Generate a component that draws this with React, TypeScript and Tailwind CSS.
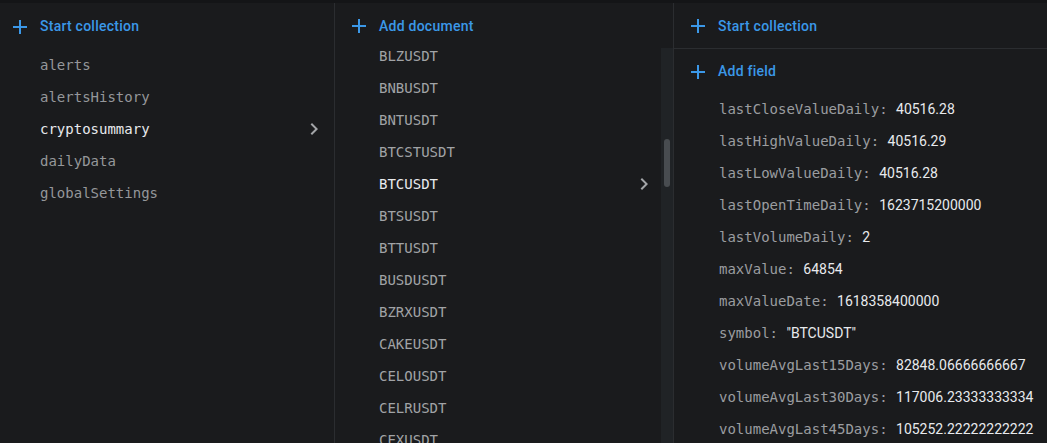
const collections = ["alerts", "alertsHistory", "cryptosummary", "dailyData", "globalSettings"]

const documents = [
  "BLZUSDT",
  "BNBUSDT",
  "BNTUSDT",
  "BTCSTUSDT",
  "BTCUSDT",
  "BTSUSDT",
  "BTTUSDT",
  "BUSDUSDT",
  "BZRXUSDT",
  "CAKEUSDT",
  "CELOUSDT",
  "CELRUSDT",
  "CEXUSDT",
]

const fields: [string, string][] = [
  ["lastCloseValueDaily", "40516.28"],
  ["lastHighValueDaily", "40516.29"],
  ["lastLowValueDaily", "40516.28"],
  ["lastOpenTimeDaily", "1623715200000"],
  ["lastVolumeDaily", "2"],
  ["maxValue", "64854"],
  ["maxValueDate", "1618358400000"],
  ["symbol", '"BTCUSDT"'],
  ["volumeAvgLast15Days", "82848.06666666667"],
  ["volumeAvgLast30Days", "117006.23333333334"],
  ["volumeAvgLast45Days", "105252.22222222222"],
]

const mono = "font-['DejaVu_Sans_Mono','Liberation_Mono',monospace]"
const sans = "font-['Roboto','Noto_Sans',sans-serif]"

const PlusIcon = () => (
  <svg width="24" height="24" viewBox="0 0 24 24" className="shrink-0 fill-[#3b98e8]">
    <path d="M19 13h-6v6h-2v-6H5v-2h6V5h2v6h6v2z" />
  </svg>
)

const Chevron = () => (
  <svg width="24" height="24" viewBox="0 0 24 24" className="shrink-0 fill-[#a3a5a8]">
    <path d="M10 6L8.59 7.41 13.17 12l-4.58 4.59L10 18l6-6z" />
  </svg>
)

const ActionRow = ({ label, className }: { label: string; className?: string }) => (
  <div className={`flex items-center gap-2 ${className ?? ""}`}>
    <PlusIcon />
    <span className={`${sans} text-[14px] font-medium tracking-[0.25px] text-[#3b98e8]`}>{label}</span>
  </div>
)

export default function App() {
  return (
    <div className="flex h-[443px] w-[1047px] flex-col overflow-hidden bg-[#1a1b1d]">
      <div className="h-[3px] shrink-0 bg-[#141517]" />
      <div className="flex min-h-0 flex-1">
        {/* collections */}
        <div className="flex w-[335px] shrink-0 flex-col border-r border-[#2b2d30] pt-px">
          <ActionRow label="Start collection" className="h-[45px] shrink-0 pl-2" />
          <div className="flex flex-col">
            {collections.map((name) => {
              const active = name === "cryptosummary"
              return (
                <div key={name} className="flex h-8 items-center justify-between pl-10 pr-2">
                  <span className={`${mono} text-[14px] ${active ? "text-[#e8eaed]" : "text-[#95979a]"}`}>
                    {name}
                  </span>
                  {active && <Chevron />}
                </div>
              )
            })}
          </div>
        </div>

        {/* documents */}
        <div className="flex w-[339px] shrink-0 flex-col border-r border-[#2b2d30]">
          <ActionRow label="Add document" className="h-[45px] shrink-0 pl-3 pt-px" />
          <div className="flex min-h-0 flex-1">
            <div className="flex min-w-0 flex-1 flex-col overflow-hidden">
              <div className="-mt-[8px] flex flex-col">
                {documents.map((name) => {
                  const active = name === "BTCUSDT"
                  return (
                    <div key={name} className="flex h-8 shrink-0 items-center justify-between pl-11 pr-[5px]">
                      <span className={`${mono} text-[14px] ${active ? "text-[#e8eaed]" : "text-[#a1a3a6]"}`}>
                        {name}
                      </span>
                      {active && <Chevron />}
                    </div>
                  )
                })}
              </div>
            </div>
            <div className="w-3 shrink-0 bg-[#202326] pt-[91px] pl-[3px]">
              <div className="h-12 w-[6px] rounded-full bg-[#484c50]" />
            </div>
          </div>
        </div>

        {/* fields */}
        <div className="flex min-w-0 flex-1 flex-col">
          <ActionRow label="Start collection" className="h-[46px] shrink-0 border-b border-[#2b2d30] pl-3 pt-px" />
          <ActionRow label="Add field" className="h-[44px] shrink-0 pl-3 pt-px" />
          <div className="flex flex-col">
            {fields.map(([key, value]) => (
              <div key={key} className="flex h-8 shrink-0 items-center whitespace-nowrap pl-[45px]">
                <span className={`${mono} text-[14px] text-[#9b9da0]`}>{key}:&nbsp;</span>
                <span className={`${sans} text-[14px] text-[#e8eaed]`}>{value}</span>
              </div>
            ))}
          </div>
        </div>
      </div>
    </div>
  )
}
